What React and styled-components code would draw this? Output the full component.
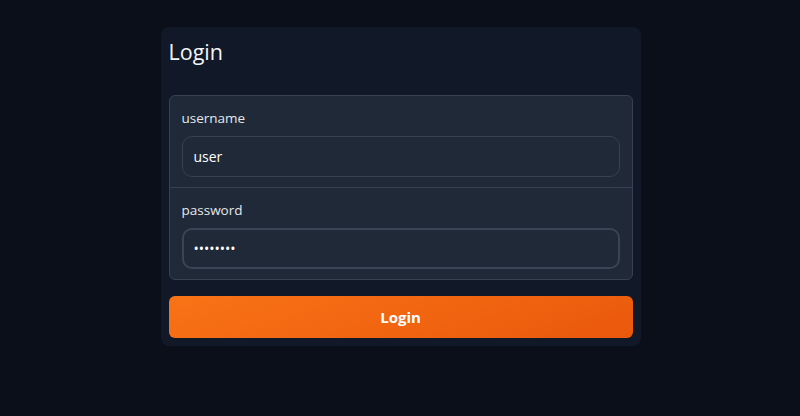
import { createGlobalStyle } from 'styled-components';
import styled from 'styled-components';

const GlobalStyle = createGlobalStyle`
  html, body {
    margin: 0;
    padding: 0;
    background: #0b0f19;
  }
  body {
    font-family: "Open Sans", "Noto Sans", "Liberation Sans", sans-serif;
    color: #e5e7eb;
  }
`;

function App() {
  return (
    <Page>
      <GlobalStyle />
      <Card>
        <Title>Login</Title>
        <Fields>
          <Field>
            <Label htmlFor="username">username</Label>
            <Input id="username" type="text" defaultValue="user" />
          </Field>
          <Field>
            <Label htmlFor="password">password</Label>
            <Input id="password" type="password" defaultValue="password" $focused autoFocus />
          </Field>
        </Fields>
        <Button>Login</Button>
      </Card>
    </Page>
  );
}

const Page = styled.div`
  min-height: 416px;
  display: flex;
  justify-content: center;
  align-items: flex-start;
  padding: 27px 0 0 1px;
  box-sizing: border-box;
`;

const Card = styled.div`
  width: 480px;
  box-sizing: border-box;
  background: #111827;
  border-radius: 8px;
  padding: 8px;
  display: flex;
  flex-direction: column;
`;

const Title = styled.h1`
  margin: 2px 0 28px 0;
  font-size: 21.5px;
  font-weight: 400;
  line-height: 30px;
  color: #f3f4f6;
`;

const Fields = styled.div`
  background: #1f2937;
  border: 1px solid #374151;
  border-radius: 6px;
  overflow: hidden;
`;

const Field = styled.div`
  display: flex;
  flex-direction: column;
  gap: 8px;
  padding: 12px 12px 10px;

  & + & {
    border-top: 1px solid #374151;
  }
`;

const Label = styled.label`
  font-size: 13.5px;
  line-height: 20px;
  color: #e5e7eb;
`;

const Input = styled.input`
  height: 41px;
  box-sizing: border-box;
  background: #1f2937;
  border: ${p => (p.$focused ? '2px solid #3a4454' : '1px solid #374151')};
  border-radius: 10px;
  padding: 0 ${p => (p.$focused ? '10px' : '11px')};
  font-family: inherit;
  font-size: 14px;
  color: #ffffff;
  caret-color: #ffffff;
  outline: none;
`;

const Button = styled.button`
  margin-top: 16px;
  height: 42px;
  border: none;
  border-radius: 6px;
  background: linear-gradient(160deg, #f97316 0%, #ea580c 100%);
  color: #ffffff;
  font-family: inherit;
  font-size: 15px;
  font-weight: 700;
  cursor: pointer;
`;

export default App;
